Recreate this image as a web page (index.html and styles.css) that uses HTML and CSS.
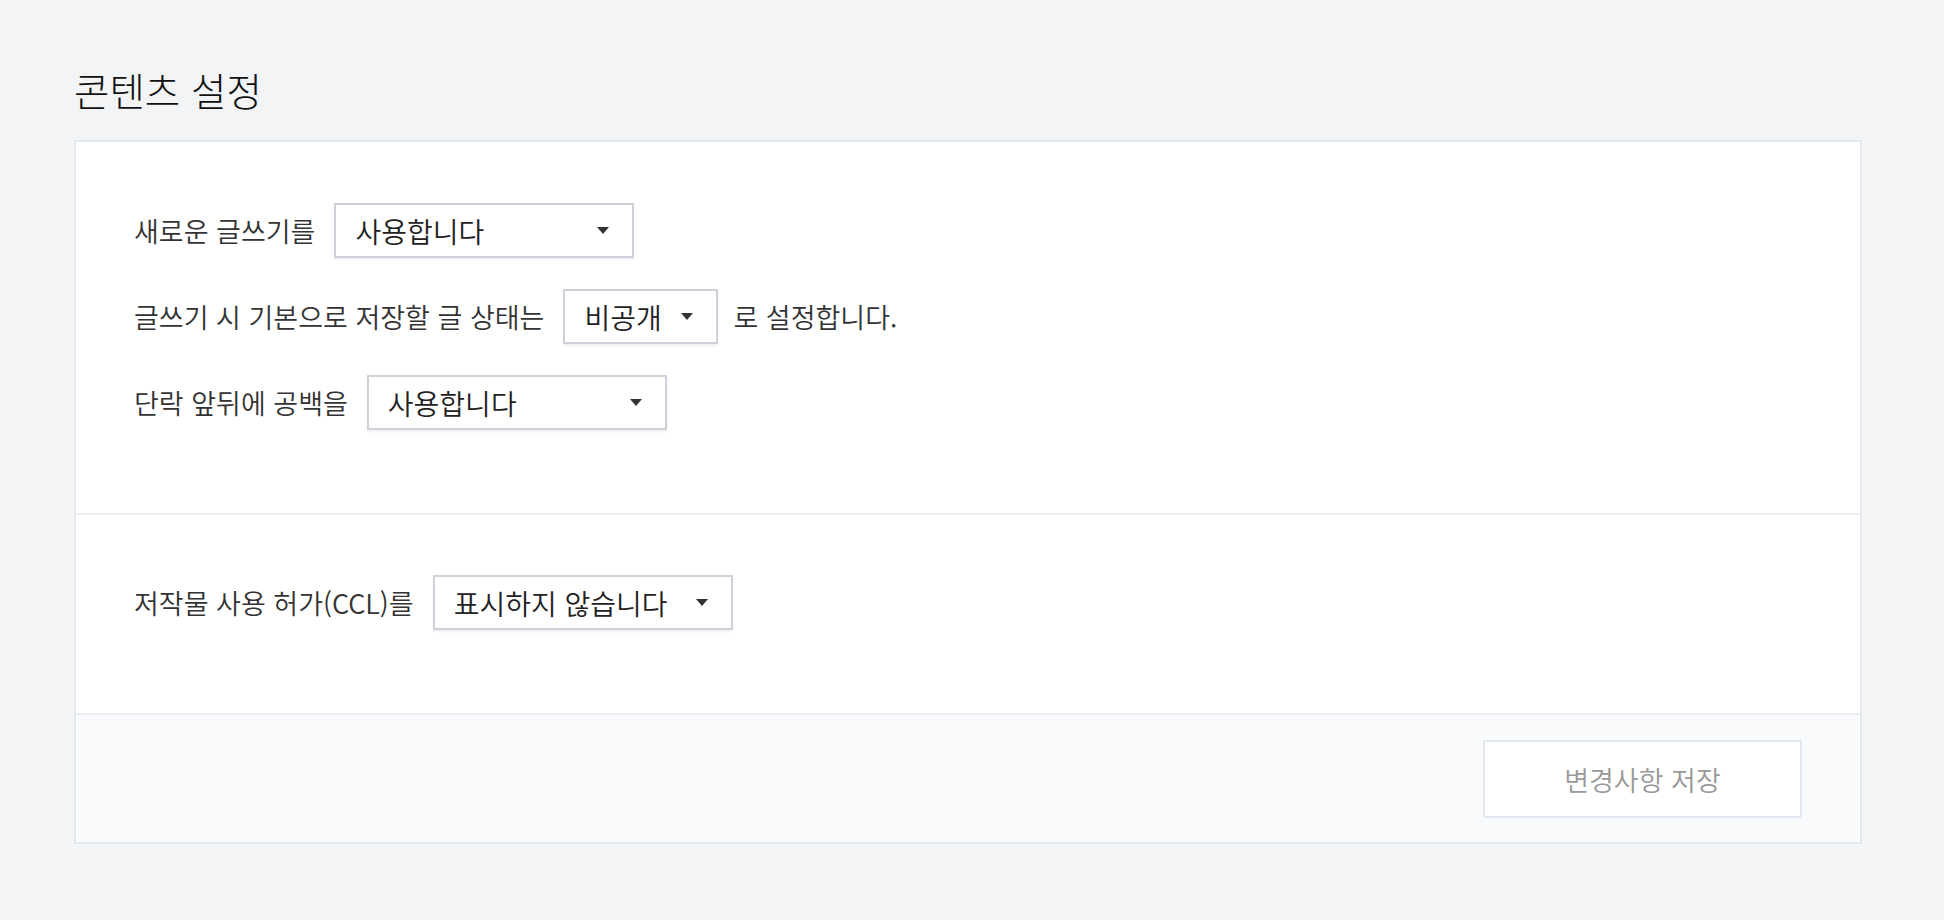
FILE: index.html
```html
<!DOCTYPE html>
<html lang="ko">
  <head>
    <meta charset="UTF-8" />
    <meta name="viewport" content="width=device-width, initial-scale=1.0" />
    <title>콘텐츠 설정</title>
    <link rel="stylesheet" href="styles.css">
  </head>
  <body>
    <h2 class="title">콘텐츠 설정</h2>

    <div class="card">
      <!-- 글쓰기 설정 -->
      <div class="section">
        <div class="row">
          <span class="label">새로운 글쓰기를</span>
          <div class="select">
            <span>사용합니다</span>
            <svg class="arrow" width="12" height="7" viewBox="0 0 12 7"><path d="M0 0h12L6 7z" /></svg>
          </div>
        </div>
        <div class="row">
          <span class="label">글쓰기 시 기본으로 저장할 글 상태는</span>
          <div class="select select-sm">
            <span>비공개</span>
            <svg class="arrow" width="12" height="7" viewBox="0 0 12 7"><path d="M0 0h12L6 7z" /></svg>
          </div>
          <span class="after">로 설정합니다.</span>
        </div>
        <div class="row">
          <span class="label">단락 앞뒤에 공백을</span>
          <div class="select">
            <span>사용합니다</span>
            <svg class="arrow" width="12" height="7" viewBox="0 0 12 7"><path d="M0 0h12L6 7z" /></svg>
          </div>
        </div>
      </div>

      <!-- CCL -->
      <div class="section">
        <div class="row">
          <span class="label">저작물 사용 허가(CCL)를</span>
          <div class="select">
            <span>표시하지 않습니다</span>
            <svg class="arrow" width="12" height="7" viewBox="0 0 12 7"><path d="M0 0h12L6 7z" /></svg>
          </div>
        </div>
      </div>

      <div class="footer">
        <button class="btn-save" disabled>변경사항 저장</button>
      </div>
    </div>
  </body>
</html>
```

FILE: styles.css
```css
* {
  margin: 0;
  padding: 0;
  box-sizing: border-box;
}
body {
  padding: 66px 82px 0 74px;
  background-color: #f3f4f6;
  font-family: "Noto Sans CJK KR", "Noto Sans", sans-serif;
  color: #333;
}

/* title */
.title {
  font-size: 38.5px;
  font-weight: 300;
  line-height: 46px;
  color: #111;
  margin-bottom: 28px;
}

/* card */
.card {
  background-color: #fff;
  border: 2px solid #e3e7ef;
}

.section {
  display: flex;
  flex-direction: column;
  gap: 31px;
  padding: 61px 58px 83px;
  border-bottom: 2px solid #eeeff4;
}
.section + .section {
  padding-top: 60px;
}

.row {
  display: flex;
  align-items: center;
  font-size: 27px;
  font-weight: 350;
}
.label {
  margin-right: 19px;
}
.after {
  margin-left: 15px;
}

/* 가짜 select */
.select {
  display: flex;
  align-items: center;
  justify-content: space-between;
  width: 300px;
  height: 55px;
  padding: 0 23px 0 19px;
  border: 2px solid #cdd1d9;
  box-shadow: 0 2px 2px rgba(0, 0, 0, 0.06);
  background-color: #fff;
  color: #222;
  font-size: 28px;
}
.select-sm {
  width: 155px;
}
.select span {
  padding-top: 1px;
}
.arrow {
  fill: #333;
  flex-shrink: 0;
}

/* footer */
.footer {
  display: flex;
  justify-content: flex-end;
  padding: 25px 58px 24px;
  background-color: #f9fafc;
}
.btn-save {
  width: 319px;
  height: 78px;
  border: 2px solid #e2e6ee;
  border-radius: 2px;
  background-color: #fff;
  font-family: inherit;
  font-size: 27px;
  font-weight: 350;
  color: #999;
}
```
